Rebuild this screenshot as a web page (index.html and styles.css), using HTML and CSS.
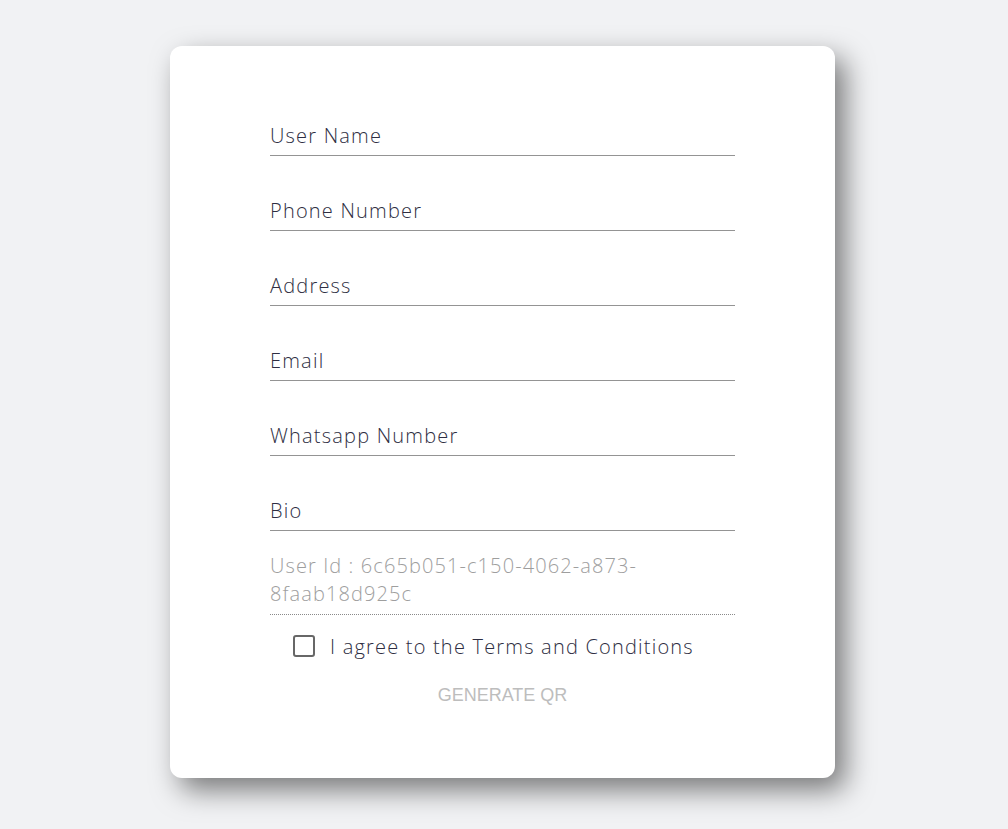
FILE: index.html
```html
<!DOCTYPE html>
<html>
    <head>
        <meta charset="UTF-8" />
        <meta name="viewport" content="width=device-width, initial-scale=1.0" />
        <title>Generate QR</title>
        <link rel="stylesheet" href="styles.css">
    </head>
    <body>
        <div class="page">
            <form class="card" id="qrform">
                <div class="field"><span class="label">User Name</span></div>
                <div class="field"><span class="label">Phone Number</span></div>
                <div class="field"><span class="label">Address</span></div>
                <div class="field"><span class="label">Email</span></div>
                <div class="field"><span class="label">Whatsapp Number</span></div>
                <div class="field"><span class="label">Bio</span></div>

                <div class="userid">User Id : 6c65b051-c150-4062-a873-8faab18d925c</div>

                <label class="agree">
                    <span class="box"></span>
                    <span class="agree-text">I agree to the Terms and Conditions</span>
                </label>

                <div class="actions">
                    <button type="button" class="generate" disabled>Generate QR</button>
                </div>
            </form>
        </div>
    </body>
</html>
```

FILE: styles.css
```css
* {
  margin: 0;
  padding: 0;
  box-sizing: border-box;
}

html, body {
  width: 100%;
  height: 100%;
  background: #f1f2f4;
  font-family: "Open Sans", "DejaVu Sans", sans-serif;
}

.page {
  display: flex;
  justify-content: center;
  padding-top: 46px;
  padding-right: 3px;
}

.card {
  width: 665px;
  background: #fff;
  border-radius: 12px;
  box-shadow: 10px 12px 28px rgba(0, 0, 0, 0.5);
  padding: 77px 100px 65px 100px;
}

.field {
  height: 33px;
  margin-top: 42px;
  padding-bottom: 7px;
  border-bottom: 1px solid #949494;
  display: flex;
  align-items: flex-end;
}

.field:first-child {
  margin-top: 0;
}

.label {
  font-size: 20px;
  line-height: 24px;
  font-weight: 300;
  color: #2e2e42;
  letter-spacing: 1.2px;
}

.userid {
  margin-top: 21px;
  padding-bottom: 6px;
  font-size: 20px;
  line-height: 28px;
  font-weight: 300;
  color: #9e9e9e;
  letter-spacing: 1.1px;
  border-bottom: 1px dotted #8a8a8a;
  overflow-wrap: anywhere;
}

.agree {
  display: flex;
  align-items: center;
  height: 40px;
  margin-top: 11px;
  padding-left: 23px;
}

.box {
  width: 22px;
  height: 22px;
  border: 2.5px solid #676767;
  border-radius: 3px;
  margin-right: 15px;
}

.agree-text {
  font-size: 20px;
  font-weight: 300;
  color: #2e2e42;
  letter-spacing: 1.2px;
}

.actions {
  display: flex;
  justify-content: center;
  margin-top: 11px;
}

.generate {
  height: 36px;
  padding: 0 16px;
  border: 0;
  background: transparent;
  font-family: "Liberation Sans", Arial, sans-serif;
  font-size: 18px;
  text-transform: uppercase;
  color: #bdbdbd;
}
```
